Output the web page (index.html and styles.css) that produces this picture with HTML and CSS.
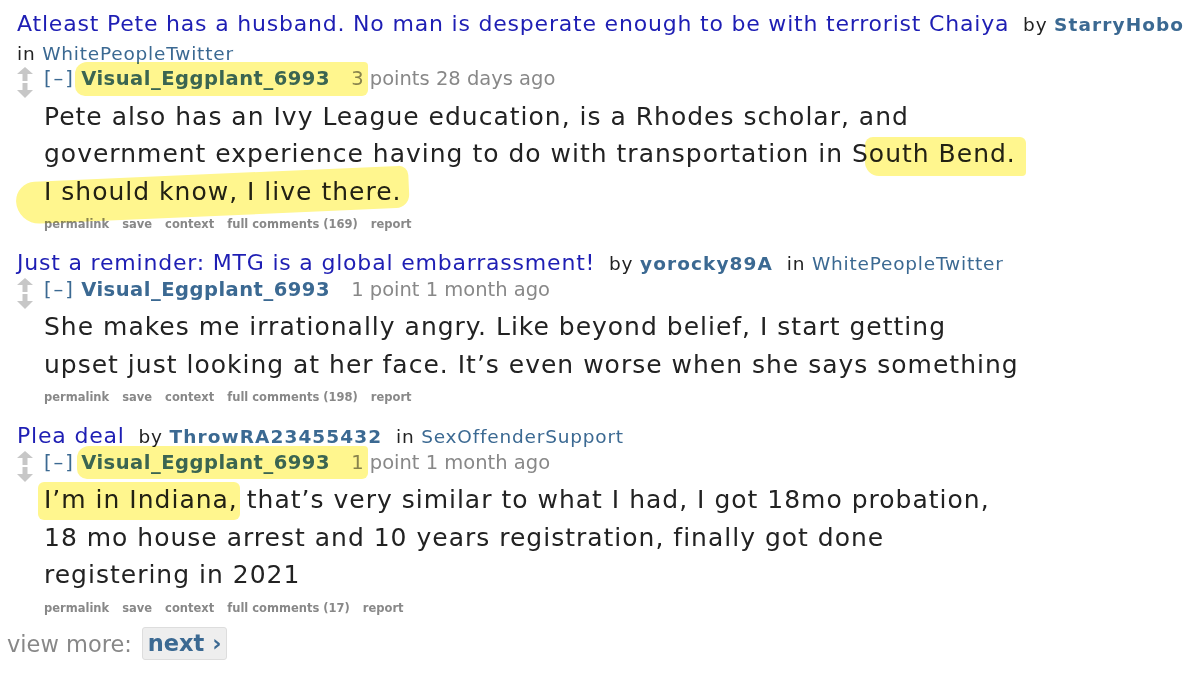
FILE: index.html
```html
<!DOCTYPE html>
<html lang="en">
  <head>
    <meta charset="UTF-8" />
    <meta name="viewport" content="width=device-width, initial-scale=1.0" />
    <title>Visual_Eggplant_6993 comments</title>
    <link rel="stylesheet" href="styles.css">
  </head>
  <body>
    <div class="listing">
      <div class="entry">
        <p class="parent">
          <a class="title" href="#">Atleast Pete has a husband. No man is desperate enough to be with terrorist Chaiya</a>
          <span class="by">by <a class="author" href="#">StarryHobo</a></span>
          <span class="in">in <a class="sub" href="#">WhitePeopleTwitter</a></span>
        </p>
        <div class="comment">
          <div class="arrows">
            <svg width="16" height="31" viewBox="0 0 16 31">
              <path d="M8 0 L16 7 L10.5 7 L10.5 14 L5.5 14 L5.5 7 L0 7 Z" fill="#c7c7c7" />
              <path d="M8 31 L16 23 L10.5 23 L10.5 16 L5.5 16 L5.5 23 L0 23 Z" fill="#c7c7c7" />
            </svg>
          </div>
          <div class="content">
            <p class="tagline">
              <a class="expand" href="#">[–]</a>
              <span class="hl hl-tag"><a class="author" href="#">Visual_Eggplant_6993</a> <span class="score">3</span></span><span class="score"> points</span>
              <time>28 days ago</time>
            </p>
            <div class="md">
              <p>Pete also has an Ivy League education, is a Rhodes scholar, and government experience having to do with transportation in S<span class="hl hl-bend">outh Bend.</span> <span class="hl hl-line">I should know, I live there.</span></p>
            </div>
            <ul class="buttons">
              <li><a href="#">permalink</a></li>
              <li><a href="#">save</a></li>
              <li><a href="#">context</a></li>
              <li><a href="#">full comments (169)</a></li>
              <li><a href="#">report</a></li>
            </ul>
          </div>
        </div>
      </div>

      <div class="entry">
        <p class="parent">
          <a class="title" href="#">Just a reminder: MTG is a global embarrassment!</a>
          <span class="by">by <a class="author" href="#">yorocky89A</a></span>
          <span class="in">in <a class="sub" href="#">WhitePeopleTwitter</a></span>
        </p>
        <div class="comment">
          <div class="arrows">
            <svg width="16" height="31" viewBox="0 0 16 31">
              <path d="M8 0 L16 7 L10.5 7 L10.5 14 L5.5 14 L5.5 7 L0 7 Z" fill="#c7c7c7" />
              <path d="M8 31 L16 23 L10.5 23 L10.5 16 L5.5 16 L5.5 23 L0 23 Z" fill="#c7c7c7" />
            </svg>
          </div>
          <div class="content">
            <p class="tagline">
              <a class="expand" href="#">[–]</a>
              <a class="author" href="#">Visual_Eggplant_6993</a>
              <span class="score">1 point</span>
              <time>1 month ago</time>
            </p>
            <div class="md">
              <p>She makes me irrationally angry. Like beyond belief, I start getting upset just looking at her face. It’s even worse when she says something</p>
            </div>
            <ul class="buttons">
              <li><a href="#">permalink</a></li>
              <li><a href="#">save</a></li>
              <li><a href="#">context</a></li>
              <li><a href="#">full comments (198)</a></li>
              <li><a href="#">report</a></li>
            </ul>
          </div>
        </div>
      </div>

      <div class="entry">
        <p class="parent">
          <a class="title" href="#">Plea deal</a>
          <span class="by">by <a class="author" href="#">ThrowRA23455432</a></span>
          <span class="in">in <a class="sub" href="#">SexOffenderSupport</a></span>
        </p>
        <div class="comment">
          <div class="arrows">
            <svg width="16" height="31" viewBox="0 0 16 31">
              <path d="M8 0 L16 7 L10.5 7 L10.5 14 L5.5 14 L5.5 7 L0 7 Z" fill="#c7c7c7" />
              <path d="M8 31 L16 23 L10.5 23 L10.5 16 L5.5 16 L5.5 23 L0 23 Z" fill="#c7c7c7" />
            </svg>
          </div>
          <div class="content">
            <p class="tagline">
              <a class="expand" href="#">[–]</a>
              <span class="hl hl-tag2"><a class="author" href="#">Visual_Eggplant_6993</a> <span class="score">1</span></span><span class="score"> point</span>
              <time>1 month ago</time>
            </p>
            <div class="md">
              <p><span class="hl hl-indiana">I’m in Indiana,</span> that’s very similar to what I had, I got 18mo probation, 18 mo house arrest and 10 years registration, finally got done registering in 2021</p>
            </div>
            <ul class="buttons">
              <li><a href="#">permalink</a></li>
              <li><a href="#">save</a></li>
              <li><a href="#">context</a></li>
              <li><a href="#">full comments (17)</a></li>
              <li><a href="#">report</a></li>
            </ul>
          </div>
        </div>
      </div>

      <div class="nav-buttons">
        <span>view more:</span>
        <a class="next" href="#">next ›</a>
      </div>
    </div>
  </body>
</html>
```

FILE: styles.css
```css
* {
  box-sizing: border-box;
}
body {
  margin: 0;
  background: #fff;
  color: #222;
  font-family: "DejaVu Sans", Verdana, sans-serif;
}
a {
  text-decoration: none;
}
.listing {
  padding: 10px 0 0 17px;
  width: 1195px;
}
.entry {
  margin-bottom: 17px;
}
.parent {
  margin: 0;
  font-size: 22px;
  letter-spacing: 0.8px;
  line-height: 27.5px;
}
.title {
  color: #1e1eb4;
  margin-right: 6px;
}
.by,
.in {
  font-size: 18.5px;
  letter-spacing: 0.8px;
  color: #222;
  margin-right: 6px;
}
.by .author {
  letter-spacing: 1.1px;
}
.in {
  white-space: nowrap;
}
.author {
  color: #3b6992;
  font-weight: bold;
}
.sub {
  color: #3b6992;
}
.comment {
  display: flex;
}
.arrows {
  width: 27px;
  flex: none;
}
.arrows svg {
  display: block;
}
.content {
  flex: 1;
}
.tagline {
  margin: 0;
  font-size: 19.5px;
  line-height: 24px;
  color: #888;
}
.expand {
  color: #3b6992;
  letter-spacing: 2px;
}
.tagline .author {
  margin-right: 15px;
  letter-spacing: 0.5px;
}
.md {
  margin-top: 6.5px;
  max-width: 985px;
  font-size: 25px;
  letter-spacing: 1px;
  line-height: 37.5px;
  color: #222;
}
.md p {
  margin: 0;
}
.buttons {
  list-style: none;
  margin: 6px 0 0;
  padding: 0;
  display: flex;
  gap: 13px;
  font-size: 11.5px;
  line-height: 16px;
  font-weight: bold;
}
.buttons a {
  color: #888;
}

/* marker highlights drawn over the text */
.hl {
  position: relative;
}
.hl::before {
  content: "";
  position: absolute;
  background: #fff68e;
  mix-blend-mode: multiply;
  pointer-events: none;
}
.hl-tag::before {
  left: -6px;
  right: -4px;
  top: -5px;
  bottom: -6px;
  border-radius: 12px 4px 6px 10px;
}
.hl-tag2::before {
  left: -4px;
  right: -4px;
  top: -5px;
  bottom: -5px;
  border-radius: 12px 4px 6px 10px;
}
.hl-bend::before {
  left: -4px;
  right: -10px;
  top: -2px;
  bottom: -8px;
  border-radius: 8px 6px 4px 14px;
}
.hl-line::before {
  left: -28px;
  right: -8px;
  top: -3px;
  bottom: -10px;
  border-radius: 20px 10px 14px 24px;
  transform: rotate(-2.5deg);
}
.hl-indiana::before {
  left: -6px;
  right: -2px;
  top: -3px;
  bottom: -6px;
  border-radius: 6px;
}

.nav-buttons {
  display: flex;
  align-items: center;
  gap: 10px;
  height: 34px;
  margin: -6px 0 0 -10px;
  font-size: 22.5px;
  color: #888;
}
.next {
  padding: 0 5px;
  line-height: 31px;
  background: #eee;
  border: 1px solid #ddd;
  border-radius: 3px;
  color: #3b6992;
  font-weight: bold;
}
```
